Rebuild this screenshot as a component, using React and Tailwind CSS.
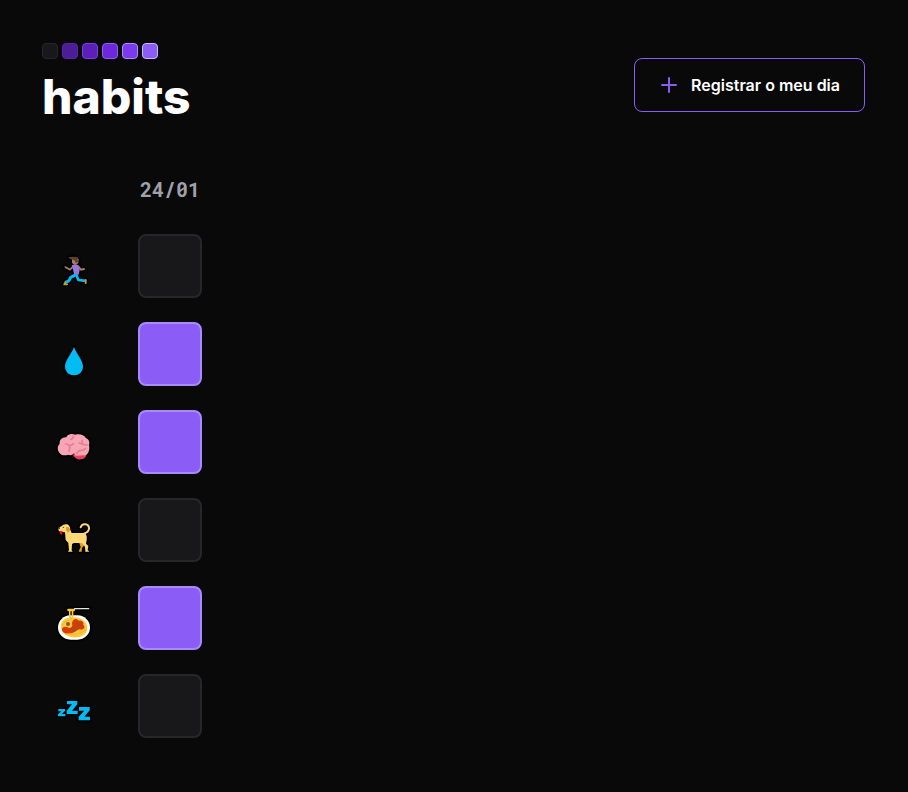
import React from "react";

const swatches = [
  "bg-[#18181b] border-[#27272a]",
  "bg-[#4c1d95] border-[#5b21b6]",
  "bg-[#5b21b6] border-[#7c3aed]",
  "bg-[#6d28d9] border-[#8b5cf6]",
  "bg-[#7c3aed] border-[#a78bfa]",
  "bg-[#8b5cf6] border-[#c4b5fd]",
];

function Emoji({ viewBox, label, children }) {
  return (
    <svg
      viewBox={viewBox}
      role="img"
      aria-label={label}
      className="size-16 [filter:drop-shadow(1px_0_0_#000)_drop-shadow(-1px_0_0_#000)_drop-shadow(0_1px_0_#000)_drop-shadow(0_-1px_0_#000)_drop-shadow(0_0_1px_#000)]"
    >
      {children}
    </svg>
  );
}

function Runner() {
  return (
    <Emoji viewBox="-24 -48 192 192" label="Exercitar">
      <g fill="none" strokeLinecap="round" strokeLinejoin="round">
        <path d="M69 50 L60 59 L46 51" stroke="#a5805c" strokeWidth="5" />
        <path d="M85 50 L93 59 L102 57" stroke="#a5805c" strokeWidth="6" />
        <path d="M47 95 L43 103 L51 103" stroke="#d9961f" strokeWidth="6" />
        <path d="M107 90 L107 99" stroke="#d9961f" strokeWidth="6" />
        <path d="M74 76 L62 82 L57 92 L50 96" stroke="#00bcf2" strokeWidth="9" />
        <path d="M80 76 L85 90 L102 92" stroke="#00bcf2" strokeWidth="8" />
      </g>
      <path d="M65 46 Q76 41 85 46 L89 60 L86 74 L72 72 L70 62 Z" fill="#9b75e0" />
      <path d="M66 28 Q76 20 86 27 L85 38 Q81 45 74 45 L66 39 Z" fill="#a5805c" />
      <path d="M54 22 Q74 18 84 23 L82 30 L86 34 L78 40 L75 33 L69 29 L62 28 Z" fill="#5f4033" />
    </Emoji>
  );
}

function Drop() {
  return (
    <Emoji viewBox="-24 -54 192 192" label="Beber água">
      <path d="M72 20 C67 39 45 59 45 79 C45 96 57 106 72 106 C87 106 99 96 99 79 C99 59 77 39 72 20 Z" fill="#00bcf2" />
    </Emoji>
  );
}

function Brain() {
  return (
    <Emoji viewBox="-24 -45 192 192" label="Meditar">
      <path d="M68 89 Q78 106 94 103 Q108 101 110 86 L91 82 Z" fill="#e8425f" />
      <path d="M28 83 C21 74 22 62 29 57 C27 46 36 36 49 37 C53 27 65 25 76 29 C87 25 103 29 108 40 C116 42 120 51 117 60 C120 72 116 86 107 91 L77 92 L72 85 C66 92 59 91 55 89 C43 93 32 90 28 83 Z" fill="#f8a5b5" />
      <g fill="none" stroke="#e57f92" strokeWidth="5" strokeLinecap="round">
        <path d="M47 57 Q53 57 58 62 Q65 62 70 56 M58 62 Q62 70 57 79" />
        <path d="M63 43 Q69 42 70 34" />
        <path d="M88 54 Q99 60 112 60 M99 57 Q94 51 96 46" />
        <path d="M80 86 Q84 76 94 76 Q103 76 107 70" />
      </g>
    </Emoji>
  );
}

function Dog() {
  return (
    <Emoji viewBox="-24 -51 192 192" label="Passear com o cachorro">
      <path d="M86 78 L104 76 L103 90 L96 99 L95 110 L86 110 L88 104 L92 97 Z" fill="#e6a11c" />
      <path
        d="M92 37 C96 23 117 25 117 40 C117 50 109 54 101 56"
        fill="none"
        stroke="#ffd977"
        strokeWidth="6"
        strokeLinecap="round"
      />
      <path d="M25 39 L34 34 Q40 26 52 28 Q60 31 61 45 L65 54 L103 54 Q112 58 110 74 L108 86 L115 93 L113 105 L118 110 L106 110 L105 96 L96 84 L72 84 L66 87 L65 106 L68 110 L54 110 L57 105 L55 84 L47 75 L45 52 L30 50 Q23 46 25 39 Z" fill="#ffd977" />
      <path d="M48 36 Q58 35 60 43 Q60 51 54 53 Q47 49 48 36 Z" fill="#d79a2a" />
      <path d="M29 48 L38 49 L36 59 L30 57 Z" fill="#e81224" />
      <path d="M24 38 L30 37 L29 42 L25 43 Z" fill="#382b24" />
      <circle cx="40" cy="37" r="2" fill="#382b24" />
    </Emoji>
  );
}

function Spaghetti() {
  return (
    <Emoji viewBox="-24 -42 192 192" label="Comer bem">
      <rect x="24" y="46" width="96" height="73" rx="37" fill="#fff" />
      <path d="M33 82 C31 65 42 54 58 53 C80 48 108 57 111 77 C116 96 101 111 81 112 C53 114 36 101 33 82 Z" fill="#ffc83d" />
      <path d="M59 32 V64 M68 30 V62" fill="none" stroke="#ffc83d" strokeWidth="4" />
      <path d="M63 32 V60" fill="none" stroke="#d59a26" strokeWidth="2" />
      <path d="M55 30 H72" stroke="#ffc83d" strokeWidth="7" strokeLinecap="round" />
      <path d="M74 26 H116" stroke="#e5e5e5" strokeWidth="4" strokeLinecap="round" />
      <path d="M66 71 C66 57 79 53 86 62 C94 61 102 65 100 74 C108 83 99 91 89 88 C80 90 76 98 65 99 C51 104 36 98 36 89 C36 79 47 79 56 83 C64 85 69 78 66 71 Z" fill="#da3b01" />
      <g fill="none" stroke="#f2a51f" strokeWidth="2">
        <path d="M45 103 Q68 97 79 111 M72 101 Q92 104 108 88 M38 77 Q44 61 59 61" />
      </g>
      <circle cx="54" cy="72" r="6" fill="#8f562e" />
      <circle cx="73" cy="88" r="6" fill="#8f562e" />
      <circle cx="89" cy="72" r="6" fill="#8f562e" />
    </Emoji>
  );
}

function Sleep() {
  return (
    <Emoji viewBox="-24 -48 192 192" label="Dormir 8h">
      <g fill="#00bcf2">
        <path d="M25 57 H45 V63 L35 72 H46 V79 H24 V73 L34 64 H25 Z" />
        <path d="M51 33 H82 V43 L66 62 H83 V72 H50 V62 L66 43 H51 Z" />
        <path d="M87 51 H119 V61 L103 80 H120 V91 H86 V80 L103 62 H87 Z" />
      </g>
    </Emoji>
  );
}

const habits = [
  { id: "exercitar", Icon: Runner, done: false },
  { id: "agua", Icon: Drop, done: true },
  { id: "meditar", Icon: Brain, done: true },
  { id: "passear", Icon: Dog, done: false },
  { id: "comer", Icon: Spaghetti, done: true },
  { id: "dormir", Icon: Sleep, done: false },
];

export default function App() {
  return (
    <div className="min-h-screen bg-[#09090a] pt-[43px] pr-[43px] pb-12 pl-[42px] font-['Inter',sans-serif] text-white">
      <header className="flex items-center justify-between">
        <div className="flex flex-col gap-2">
          <div className="flex gap-1">
            {swatches.map((colors) => (
              <span key={colors} className={`size-4 rounded border ${colors}`} />
            ))}
          </div>
          <h1 className="text-5xl leading-[60px] font-extrabold">habits</h1>
        </div>
        <button
          type="button"
          className="flex items-center gap-3 rounded-lg border border-[#8b5cf6] px-6 py-[14px] text-base leading-6 font-semibold"
        >
          <svg viewBox="0 0 20 20" className="size-5" fill="none" stroke="#8b5cf6" strokeWidth="2" strokeLinecap="round" aria-hidden="true">
            <path d="M10 3 V17 M3 10 H17" />
          </svg>
          Registrar o meu dia
        </button>
      </header>

      <main className="mt-12 flex gap-8">
        <div className="flex flex-col gap-6 pt-[59px]">
          {habits.map(({ id, Icon }) => (
            <Icon key={id} />
          ))}
        </div>
        <div className="flex w-16 flex-col items-center">
          <h2 className="mb-[31px] font-['Roboto_Mono','DejaVu_Sans_Mono',monospace] text-xl leading-7 font-bold text-[#a1a1aa]">
            24/01
          </h2>
          <div className="flex flex-col gap-6">
            {habits.map(({ id, done }) => (
              <button
                key={id}
                type="button"
                aria-label={id}
                aria-pressed={done}
                className={`size-16 rounded-lg border-2 ${
                  done ? "border-[#a78bfa] bg-[#8b5cf6]" : "border-[#27272a] bg-[#18181b]"
                }`}
              />
            ))}
          </div>
        </div>
      </main>
    </div>
  );
}
